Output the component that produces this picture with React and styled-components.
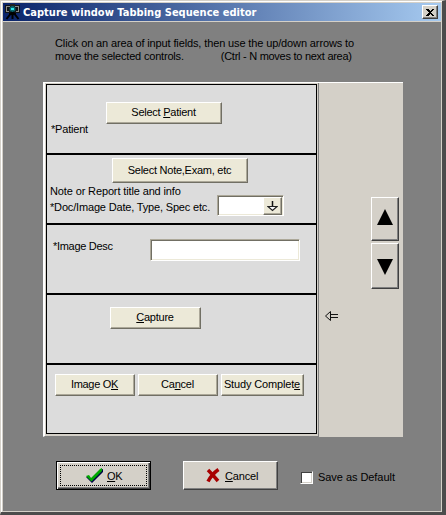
import React from "react";
import styled, { createGlobalStyle } from "styled-components";

const Global = createGlobalStyle`
  * { box-sizing: border-box; }
  body { margin: 0; overflow: hidden; background: #808080; }
`;

const Window = styled.main`
  width: 446px;
  height: 515px;
  display: flex;
  flex-direction: column;
  background: #808080;
  border: 1px solid #d4d0c8;
  border-right: 4px double #4c4c4c;
  border-right-style: solid;
  border-bottom: 3px solid #4c4c4c;
  box-shadow: inset 1px 1px #fff, inset -1px -1px #d4d0c8, inset 2px 2px #d4d0c8;
  padding: 2px 1px 0 2px;
  color: #000;
  font: 11px/14px "Liberation Sans", Arial, sans-serif;
  white-space: nowrap;
`;
const TitleBar = styled.header`
  height: 19px;
  flex: none;
  display: flex;
  align-items: center;
  padding: 0 3px 0 2px;
  background: linear-gradient(90deg, #0a246a, #a6caf0);
  border-bottom: 1px solid #d4d0c8;
`;
const Title = styled.h1`
  flex: 1;
  margin: 2px 0 0 3px;
  color: #fff;
  font: bold 11px/18px "DejaVu Sans Condensed", "DejaVu Sans", sans-serif;
  letter-spacing: 0.03px;
`;
const CloseButton = styled.button`
  width: 16px;
  height: 14px;
  padding: 0;
  display: grid;
  place-items: center;
  background: #d4d0c8;
  border: 1px solid;
  border-color: #fff #404040 #404040 #fff;
  box-shadow: inset -1px -1px #808080;
`;
const Label = styled.span`
  display: block;
  letter-spacing: ${(p) => p.$spacing || 0}px;
`;
const Instructions = styled.section`
  margin: 15px 0 0 52px;
  height: 45px;
  flex: none;
`;
const InstructionLine = styled.div`
  display: flex;
  height: 13px;
  line-height: 13px;
  gap: 37px;
`;
const Editor = styled.section`
  margin-left: 40px;
  width: 360px;
  height: 355px;
  flex: none;
  display: flex;
  background: #d4d0c8;
  border-top: 1px solid #fff;
`;
const Groups = styled.div`
  width: 276px;
  height: 354px;
  padding: 1px 1px 2px 1px;
  border-left: 2px solid #fff;
  border-right: 1px solid #808080;
  border-bottom: 1px solid #808080;
`;
const Group = styled.div`
  width: 271px;
  height: 70px;
  display: flex;
  flex-direction: column;
  align-items: flex-start;
  border: 1px solid #000;
  background: #dcdcdc;
`;
const Row = styled.div`
  display: flex;
  align-items: flex-start;
  gap: ${(p) => p.$gap || 0}px;
  margin: ${(p) => p.$top || 0}px 0 0 ${(p) => p.$left || 0}px;
`;
const Button = styled.button`
  width: ${(p) => p.$width}px;
  height: ${(p) => p.$height || 22}px;
  padding: 0 1px 2px 0;
  background: #ece9d8;
  border: 1px solid;
  border-color: #fff #716f64 #716f64 #fff;
  box-shadow: inset -1px -1px #aca899;
  font: inherit;
  color: #000;
  white-space: nowrap;
  letter-spacing: ${(p) => p.$spacing || 0}px;
`;
const Field = styled.div`
  width: ${(p) => p.$width}px;
  height: ${(p) => p.$height}px;
  display: flex;
  justify-content: flex-end;
  background: #fff;
  border: 1px solid;
  border-color: #aca899 #fff #fff #aca899;
  box-shadow: inset 1px 1px #716f64, inset -1px -1px #ece9d8;
  padding: 1px;
`;
const ComboLabel = styled(Label)`
  width: 167px;
  margin-top: 5px;
`;
const DescLabel = styled(Label)`
  width: 97px;
`;
const DropButton = styled(Button)`
  display: grid;
  place-items: center;
  padding: 0;
`;
const Side = styled.div`
  flex: 1;
  display: flex;
  justify-content: space-between;
  padding: 114px 4px 0 6px;
`;
const Pointer = styled.svg`
  margin-top: 114px;
`;
const Arrows = styled.div`
  display: flex;
  flex-direction: column;
  gap: 2px;
`;
const ArrowButton = styled.button`
  width: 28px;
  height: ${(p) => p.$height}px;
  padding: ${(p) => p.$padTop || 0}px 1px ${(p) => p.$padBottom || 0}px 0;
  display: grid;
  place-items: center;
  background: #d4d0c8;
  border: 1px solid;
  border-color: #fff #404040 #404040 #fff;
  box-shadow: inset -1px -1px #808080;
`;
const Footer = styled.footer`
  display: flex;
  margin: 24px 0 0 53px;
`;
const ActionButton = styled.button`
  width: 95px;
  height: 29px;
  margin-right: ${(p) => p.$after}px;
  padding: 2px;
  border: 1px solid;
  border-color: ${(p) => (p.$primary ? "#000" : "#fff #404040 #404040 #fff")};
  background: #d4d0c8;
  box-shadow: ${(p) =>
    p.$primary ? "inset 1px 1px #fff, inset -1px -1px #404040, inset -2px -2px #808080" : "inset -1px -1px #808080"};
  font: inherit;
  color: #000;
`;
const Face = styled.span`
  display: flex;
  align-items: center;
  width: ${(p) => (p.$focused ? 87 : 89)}px;
  height: ${(p) => (p.$focused ? 21 : 23)}px;
  margin-left: 1px;
  padding-left: ${(p) => p.$inset}px;
  gap: ${(p) => p.$gap}px;
  border: ${(p) => (p.$focused ? "1px dotted #000" : "0")};
`;
const Check = styled.span`
  width: 13px;
  height: 13px;
  margin: 10px 5px 0 0;
  background: #fff;
  border: 1px solid;
  border-color: #808080 #fff #fff #808080;
  box-shadow: inset 1px 1px #404040, inset -1px -1px #d4d0c8;
`;
const SaveLabel = styled(Label)`
  margin-top: 9px;
`;

const CameraIcon = () => (
  <svg width="15" height="16" viewBox="0 0 15 16">
    <path d="M0 1h15v8H0z" fill="#101418" />
    <path d="M1 2.5h4M10 2.5h4M1 7.500h3M11 7.500h3M1.500 2v6M13.500 2v6" stroke="#8a8a86" />
    <path d="M5 0h5v2H5z" fill="#222" />
    <circle cx="7.5" cy="5" r="3" fill="#06666c" />
    <path d="M6 4h3v2H6z" fill="#2ee6ea" />
    <path d="M7 8L1.500 15M8 8l5.500 7M7.5 8v7" stroke="#000" strokeWidth="2" />
    <path d="M4 10h7" stroke="#000" strokeWidth="2" />
  </svg>
);

export default function App() {
  return (
    <>
      <Global />
      <Window>
        <TitleBar>
          <CameraIcon />
          <Title>Capture window Tabbing Sequence editor</Title>
          <CloseButton aria-label="Close">
            <svg width="8" height="7" viewBox="0 0 8 7" shapeRendering="crispEdges">
              <path d="M0 0h2l2 2 2-2h2L5 3.5 8 7H6L4 5 2 7H0l3-3.5z" />
            </svg>
          </CloseButton>
        </TitleBar>
        <Instructions>
          <InstructionLine>
            <Label $spacing={-0.125}>Click on an area of input fields, then use the up/down arrows to</Label>
          </InstructionLine>
          <InstructionLine>
            <Label $spacing={-0.19}>move the selected controls.</Label>
            <Label $spacing={-0.27}>(Ctrl - N moves to next area)</Label>
          </InstructionLine>
        </Instructions>
        <Editor>
          <Groups>
            <Group>
              <Row $top={17} $left={59}>
                <Button $width={116} $spacing={-0.25}>Select <u>P</u>atient</Button>
              </Row>
              <Row $top={-2} $left={4}>
                <Label $spacing={-0.2}>*Patient</Label>
              </Row>
            </Group>
            <Group>
              <Row $top={3} $left={65}>
                <Button $width={136} $height={25} $spacing={-0.25}>Select Note,Exam, etc</Button>
              </Row>
              <Row $top={1} $left={3}>
                <Label $spacing={-0.13}>Note or Report title and info</Label>
              </Row>
              <Row $top={-3} $left={3}>
                <ComboLabel $spacing={-0.17}>*Doc/Image Date, Type, Spec etc.</ComboLabel>
                <Field $width={67} $height={21}>
                  <DropButton $width={19} $height={18} aria-label="Open list">
                    <svg width="11" height="11" viewBox="0 0 11 11">
                      <path d="M5.500 0v6" fill="none" stroke="#111" strokeWidth="1.500" />
                      <path d="M1 5.500h9L5.500 9.500z" fill="#fff" stroke="#222" strokeWidth="1.200" />
                    </svg>
                  </DropButton>
                </Field>
              </Row>
            </Group>
            <Group>
              <Row $top={14} $left={6}>
                <DescLabel $spacing={-0.3}>*Image Desc</DescLabel>
                <Field $width={150} $height={22} />
              </Row>
            </Group>
            <Group>
              <Row $top={12} $left={63}>
                <Button $width={91} $spacing={-0.25}><u>C</u>apture</Button>
              </Row>
            </Group>
            <Group>
              <Row $top={9} $left={8} $gap={3}>
                <Button $width={80} $spacing={-0.3}>Image O<u>K</u></Button>
                <Button $width={80} $spacing={-0.2}>Ca<u>n</u>cel</Button>
                <Button $width={83} $spacing={-0.15}>Study Complet<u>e</u></Button>
              </Row>
            </Group>
          </Groups>
          <Side>
            <Pointer width="13" height="11" viewBox="0 0 13 11">
              <path d="M5.5.5L.5 5l5 4.5z" fill="#d4d0c8" stroke="#111" />
              <path d="M6 3.5h7M6 6.5h7" stroke="#111" />
            </Pointer>
            <Arrows>
              <ArrowButton $height={44} $padBottom={4} aria-label="Move up">
                <svg width="16" height="16" viewBox="0 0 16 16"><path d="M8 0l8 16H0z" /></svg>
              </ArrowButton>
              <ArrowButton $height={46} $padTop={2} aria-label="Move down">
                <svg width="16" height="16" viewBox="0 0 16 16"><path d="M0 0h16L8 16z" /></svg>
              </ArrowButton>
            </Arrows>
          </Side>
        </Editor>
        <Footer>
          <ActionButton $primary $after={32}>
            <Face $focused $inset={25} $gap={4}>
              <svg width="17" height="16" viewBox="0 0 17 16">
                <path d="M0 9l3-1 2 3 9-9 3-1v3L6 15z" fill="#004" />
                <path d="M0 8l3-1 2 3 9-9 2-1v3L5.500 13.500z" fill="#00a800" />
              </svg>
              <Label $spacing={-0.4}><u>O</u>K</Label>
            </Face>
          </ActionButton>
          <ActionButton $after={22}>
            <Face $inset={19} $gap={5}>
              <svg width="14" height="15" viewBox="0 0 14 15">
                <path d="M2 2q4 4 10 11M12.500 1.500Q6 6 2 13.500" fill="none" stroke="#a80000" strokeWidth="3.500" />
              </svg>
              <Label $spacing={-0.15}><u>C</u>ancel</Label>
            </Face>
          </ActionButton>
          <Check />
          <SaveLabel $spacing={-0.05}>Save as Default</SaveLabel>
        </Footer>
      </Window>
    </>
  );
}
